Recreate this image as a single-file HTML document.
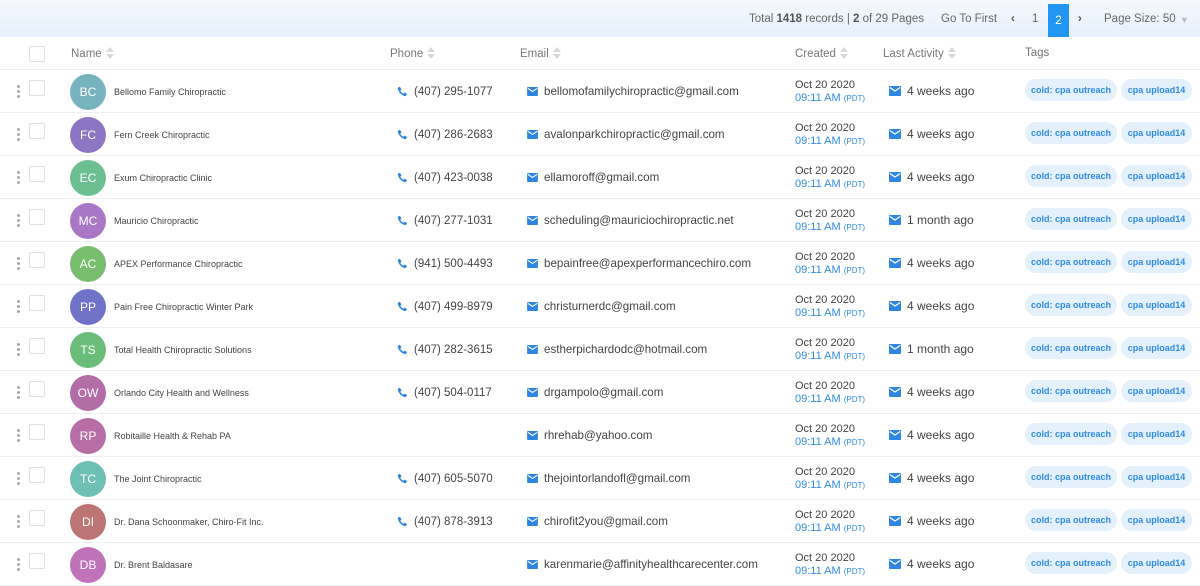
<!DOCTYPE html>
<html><head><meta charset="utf-8"><style>
*{box-sizing:border-box;margin:0;padding:0}
body{width:1200px;height:574px;overflow:hidden;background:#fff;font-family:"Liberation Sans",Arial,sans-serif;color:#444;position:relative}
.top{position:absolute;left:0;top:0;width:1200px;height:37px;background:linear-gradient(#f6f9fd,#e5effb)}
.t{position:absolute;top:13px;font-size:11.5px;color:#666;white-space:nowrap}
.t b{color:#555}
.act{position:absolute;left:1048px;top:4px;width:21px;height:33px;background:#2196f3;color:#fff;font-size:12px;text-align:center;line-height:33px}
.hd{position:absolute;top:37px;height:33px;width:1200px;border-bottom:1px solid #eceef1}
.h{position:absolute;top:10px;font-size:11.5px;color:#777}
.s{display:inline-block;width:8px;height:12px;vertical-align:-2px;margin-left:4px;position:relative}
.s:before,.s:after{content:"";position:absolute;left:0;border-left:4px solid transparent;border-right:4px solid transparent}
.s:before{top:0;border-bottom:5px solid #d8d8d8}.s:after{bottom:0;border-top:5px solid #d8d8d8}
.cb{position:absolute;left:29px;width:16px;height:16px;border:1px solid #e0e0e0;border-radius:2px;background:#fff}
.r{position:absolute;left:0;width:1200px;height:43px;border-bottom:1px solid #eef0f2}
.dots{position:absolute;left:17px;top:15px;width:3px}
.dots i{display:block;width:3px;height:3px;border-radius:50%;background:#aaa;margin-bottom:2px}
.av{position:absolute;left:70px;top:4px;width:36px;height:36px;border-radius:50%;color:#fff;font-size:12px;text-align:center;line-height:36px}
.nm{position:absolute;left:114px;top:17px;font-size:9px;color:#444;white-space:nowrap}
.ph,.em,.la{position:absolute;top:15px;line-height:14px;white-space:nowrap;color:#444}
.la{top:14px}
.ph{left:414px;font-size:11.5px}
.em{left:544px;font-size:11.6px}
.la{left:907px;font-size:12px}
.ip{position:absolute;left:397px;top:16px}
.ie{position:absolute;left:527px;top:17px}
.il{position:absolute;left:889px;top:16px}
.d1{position:absolute;left:795px;top:9px;font-size:11px;color:#444}
.d2{position:absolute;left:795px;top:22px;font-size:11px;color:#2f8ce6}
.d2 small{font-size:8px}
.tg{position:absolute;top:9px;height:22px;border-radius:11px;background:#e4f0fb;color:#2e8ce8;font-size:9px;font-weight:bold;line-height:22px;text-align:center}
.g1{left:1025px;width:92px}.g2{left:1121px;width:71px}
</style></head><body>
<div class="top">
<div class="t" style="left:749px">Total <b>1418</b> records | <b>2</b> of 29 Pages</div>
<div class="t" style="left:941px">Go To First</div>
<div class="t" style="left:1011px;font-weight:bold;color:#555">‹</div>
<div class="t" style="left:1032px">1</div>
<div class="act">2</div>
<div class="t" style="left:1078px;font-weight:bold;color:#555">›</div>
<div class="t" style="left:1104px">Page Size: 50</div>
<div class="t" style="left:1180px;color:#bbb;font-size:9px;top:15px">▼</div>
</div>
<div class="hd">
<div class="cb" style="top:9px"></div>
<div class="h" style="left:71px">Name<span class="s"></span></div>
<div class="h" style="left:390px">Phone<span class="s"></span></div>
<div class="h" style="left:520px">Email<span class="s"></span></div>
<div class="h" style="left:795px">Created<span class="s"></span></div>
<div class="h" style="left:883px">Last Activity<span class="s"></span></div>
<div class="h" style="left:1025px">Tags</div>
</div>

<svg width="0" height="0" style="position:absolute"><defs>
<symbol id="p" viewBox="0 0 12 12"><path d="M10.6 8.6L8.7 7.4c-.4-.2-.8-.1-1 .2l-.7.9C5.100 7.600 4.300 6.600 3.600 5.100l.9-.7c.3-.2.4-.7.2-1L3.500 1.400C3.300 1 2.800.9 2.400 1.100L1.400 1.800C1 2.100.8 2.600.9 3.100 1.900 7 4.800 10 8.700 11c.5.1 1-.1 1.200-.5l.8-1.100c.2-.3.1-.6-.1-.8z" fill="#2f86e0"/></symbol>
<symbol id="m" viewBox="0 0 12 10"><rect x="0" y="0" width="12" height="10" rx="1" fill="#2f86e0"/><path d="M0.8 1.5L6 5l5.2-3.5" stroke="#fff" stroke-width="1.2" fill="none"/></symbol>
</defs></svg>

<div class="r" style="top:70px"><div class="dots"><i></i><i></i><i></i></div><div class="cb" style="top:10px"></div><div class="av" style="background:#77b3bd">BC</div><div class="nm">Bellomo Family Chiropractic</div><svg class="ip" width="11" height="11"><use href="#p"/></svg><div class="ph">(407) 295-1077</div><svg class="ie" width="11" height="9"><use href="#m"/></svg><div class="em">bellomofamilychiropractic@gmail.com</div><div class="d1">Oct 20 2020</div><div class="d2">09:11 AM <small>(PDT)</small></div><svg class="il" width="12" height="10"><use href="#m"/></svg><div class="la">4 weeks ago</div><div class="tg g1">cold: cpa outreach</div><div class="tg g2">cpa upload14</div></div>

<div class="r" style="top:113px"><div class="dots"><i></i><i></i><i></i></div><div class="cb" style="top:10px"></div><div class="av" style="background:#8c76c4">FC</div><div class="nm">Fern Creek Chiropractic</div><svg class="ip" width="11" height="11"><use href="#p"/></svg><div class="ph">(407) 286-2683</div><svg class="ie" width="11" height="9"><use href="#m"/></svg><div class="em">avalonparkchiropractic@gmail.com</div><div class="d1">Oct 20 2020</div><div class="d2">09:11 AM <small>(PDT)</small></div><svg class="il" width="12" height="10"><use href="#m"/></svg><div class="la">4 weeks ago</div><div class="tg g1">cold: cpa outreach</div><div class="tg g2">cpa upload14</div></div>

<div class="r" style="top:156px"><div class="dots"><i></i><i></i><i></i></div><div class="cb" style="top:10px"></div><div class="av" style="background:#6cbf91">EC</div><div class="nm">Exum Chiropractic Clinic</div><svg class="ip" width="11" height="11"><use href="#p"/></svg><div class="ph">(407) 423-0038</div><svg class="ie" width="11" height="9"><use href="#m"/></svg><div class="em">ellamoroff@gmail.com</div><div class="d1">Oct 20 2020</div><div class="d2">09:11 AM <small>(PDT)</small></div><svg class="il" width="12" height="10"><use href="#m"/></svg><div class="la">4 weeks ago</div><div class="tg g1">cold: cpa outreach</div><div class="tg g2">cpa upload14</div></div>

<div class="r" style="top:199px"><div class="dots"><i></i><i></i><i></i></div><div class="cb" style="top:10px"></div><div class="av" style="background:#a878c6">MC</div><div class="nm">Mauricio Chiropractic</div><svg class="ip" width="11" height="11"><use href="#p"/></svg><div class="ph">(407) 277-1031</div><svg class="ie" width="11" height="9"><use href="#m"/></svg><div class="em">scheduling@mauriciochiropractic.net</div><div class="d1">Oct 20 2020</div><div class="d2">09:11 AM <small>(PDT)</small></div><svg class="il" width="12" height="10"><use href="#m"/></svg><div class="la">1 month ago</div><div class="tg g1">cold: cpa outreach</div><div class="tg g2">cpa upload14</div></div>

<div class="r" style="top:242px"><div class="dots"><i></i><i></i><i></i></div><div class="cb" style="top:10px"></div><div class="av" style="background:#79bd6e">AC</div><div class="nm">APEX Performance Chiropractic</div><svg class="ip" width="11" height="11"><use href="#p"/></svg><div class="ph">(941) 500-4493</div><svg class="ie" width="11" height="9"><use href="#m"/></svg><div class="em">bepainfree@apexperformancechiro.com</div><div class="d1">Oct 20 2020</div><div class="d2">09:11 AM <small>(PDT)</small></div><svg class="il" width="12" height="10"><use href="#m"/></svg><div class="la">4 weeks ago</div><div class="tg g1">cold: cpa outreach</div><div class="tg g2">cpa upload14</div></div>

<div class="r" style="top:285px"><div class="dots"><i></i><i></i><i></i></div><div class="cb" style="top:10px"></div><div class="av" style="background:#6f72c6">PP</div><div class="nm">Pain Free Chiropractic Winter Park</div><svg class="ip" width="11" height="11"><use href="#p"/></svg><div class="ph">(407) 499-8979</div><svg class="ie" width="11" height="9"><use href="#m"/></svg><div class="em">christurnerdc@gmail.com</div><div class="d1">Oct 20 2020</div><div class="d2">09:11 AM <small>(PDT)</small></div><svg class="il" width="12" height="10"><use href="#m"/></svg><div class="la">4 weeks ago</div><div class="tg g1">cold: cpa outreach</div><div class="tg g2">cpa upload14</div></div>

<div class="r" style="top:328px"><div class="dots"><i></i><i></i><i></i></div><div class="cb" style="top:10px"></div><div class="av" style="background:#6abd78">TS</div><div class="nm">Total Health Chiropractic Solutions</div><svg class="ip" width="11" height="11"><use href="#p"/></svg><div class="ph">(407) 282-3615</div><svg class="ie" width="11" height="9"><use href="#m"/></svg><div class="em">estherpichardodc@hotmail.com</div><div class="d1">Oct 20 2020</div><div class="d2">09:11 AM <small>(PDT)</small></div><svg class="il" width="12" height="10"><use href="#m"/></svg><div class="la">1 month ago</div><div class="tg g1">cold: cpa outreach</div><div class="tg g2">cpa upload14</div></div>

<div class="r" style="top:371px"><div class="dots"><i></i><i></i><i></i></div><div class="cb" style="top:10px"></div><div class="av" style="background:#b36da6">OW</div><div class="nm">Orlando City Health and Wellness</div><svg class="ip" width="11" height="11"><use href="#p"/></svg><div class="ph">(407) 504-0117</div><svg class="ie" width="11" height="9"><use href="#m"/></svg><div class="em">drgampolo@gmail.com</div><div class="d1">Oct 20 2020</div><div class="d2">09:11 AM <small>(PDT)</small></div><svg class="il" width="12" height="10"><use href="#m"/></svg><div class="la">4 weeks ago</div><div class="tg g1">cold: cpa outreach</div><div class="tg g2">cpa upload14</div></div>

<div class="r" style="top:414px"><div class="dots"><i></i><i></i><i></i></div><div class="cb" style="top:10px"></div><div class="av" style="background:#b86ea4">RP</div><div class="nm">Robitaille Health &amp; Rehab PA</div><svg class="ie" width="11" height="9"><use href="#m"/></svg><div class="em">rhrehab@yahoo.com</div><div class="d1">Oct 20 2020</div><div class="d2">09:11 AM <small>(PDT)</small></div><svg class="il" width="12" height="10"><use href="#m"/></svg><div class="la">4 weeks ago</div><div class="tg g1">cold: cpa outreach</div><div class="tg g2">cpa upload14</div></div>

<div class="r" style="top:457px"><div class="dots"><i></i><i></i><i></i></div><div class="cb" style="top:10px"></div><div class="av" style="background:#6ebfb4">TC</div><div class="nm">The Joint Chiropractic</div><svg class="ip" width="11" height="11"><use href="#p"/></svg><div class="ph">(407) 605-5070</div><svg class="ie" width="11" height="9"><use href="#m"/></svg><div class="em">thejointorlandofl@gmail.com</div><div class="d1">Oct 20 2020</div><div class="d2">09:11 AM <small>(PDT)</small></div><svg class="il" width="12" height="10"><use href="#m"/></svg><div class="la">4 weeks ago</div><div class="tg g1">cold: cpa outreach</div><div class="tg g2">cpa upload14</div></div>

<div class="r" style="top:500px"><div class="dots"><i></i><i></i><i></i></div><div class="cb" style="top:10px"></div><div class="av" style="background:#bd7474">DI</div><div class="nm">Dr. Dana Schoonmaker, Chiro-Fit Inc.</div><svg class="ip" width="11" height="11"><use href="#p"/></svg><div class="ph">(407) 878-3913</div><svg class="ie" width="11" height="9"><use href="#m"/></svg><div class="em">chirofit2you@gmail.com</div><div class="d1">Oct 20 2020</div><div class="d2">09:11 AM <small>(PDT)</small></div><svg class="il" width="12" height="10"><use href="#m"/></svg><div class="la">4 weeks ago</div><div class="tg g1">cold: cpa outreach</div><div class="tg g2">cpa upload14</div></div>

<div class="r" style="top:543px"><div class="dots"><i></i><i></i><i></i></div><div class="cb" style="top:10px"></div><div class="av" style="background:#bf72b8">DB</div><div class="nm">Dr. Brent Baldasare</div><svg class="ie" width="11" height="9"><use href="#m"/></svg><div class="em">karenmarie@affinityhealthcarecenter.com</div><div class="d1">Oct 20 2020</div><div class="d2">09:11 AM <small>(PDT)</small></div><svg class="il" width="12" height="10"><use href="#m"/></svg><div class="la">4 weeks ago</div><div class="tg g1">cold: cpa outreach</div><div class="tg g2">cpa upload14</div></div>
</body></html>
